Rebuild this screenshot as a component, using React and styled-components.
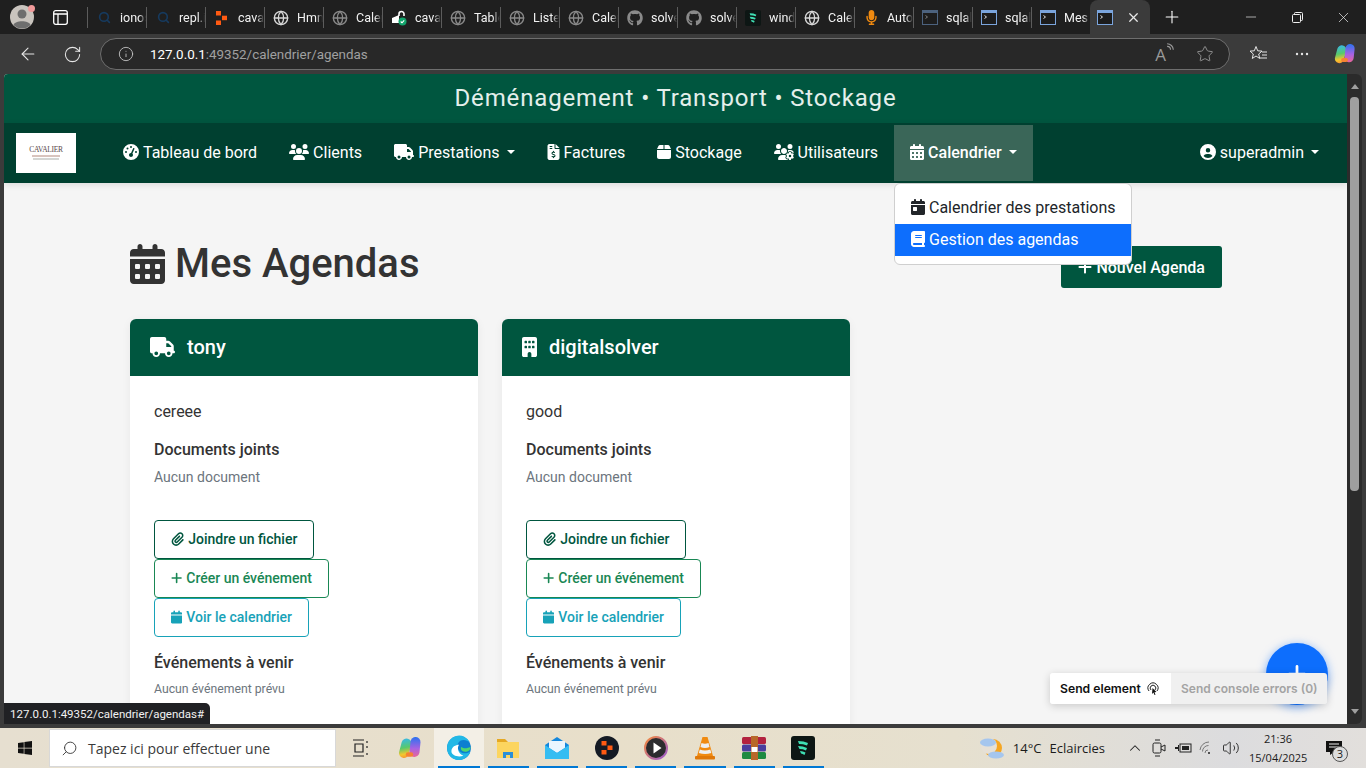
import React from 'react';
import styled, { createGlobalStyle } from 'styled-components';
import { ArrowLeft, RotateCw, Info, Star, Plus, X, Minus, Globe, Search, ChevronUp, Volume2 } from 'lucide-react';
import {
  FaGaugeHigh, FaUsers, FaTruck, FaFileInvoiceDollar, FaBox, FaUsersGear, FaCalendarDays, FaCircleUser,
  FaBook, FaPaperclip, FaPlus, FaCalendar, FaBuilding, FaCalendarDay, FaGithub, FaWindows, FaMicrophone,
} from 'react-icons/fa6';

const GlobalStyle = createGlobalStyle`
  * { box-sizing: border-box; }
  html, body { margin: 0; height: 100%; overflow: hidden; }
  body { font-family: Roboto, "Liberation Sans", sans-serif; font-size: 16px; color: #212529; }
`;

const Screen = styled.div`
  position: relative;
  width: 1366px;
  height: 768px;
  display: flex;
  flex-direction: column;
  overflow: hidden;
  background: #3b3b3b;
`;

// font awesome glyphs keep their own width, the svg box would be square otherwise
const Ico = styled.span`
  flex: none;
  display: block;
  width: ${p => p.$w}px;
  height: ${p => p.$h}px;
  svg { display: block; width: 100%; height: 100%; }
`;

/* browser chrome */
const TabStrip = styled.div`
  height: 34px;
  flex: none;
  display: flex;
  align-items: stretch;
  background: #1f1f1f;
  color: #fff;
`;

const Profile = styled.div`
  position: relative;
  width: 44px;
  flex: none;
  display: flex;
  align-items: center;
  justify-content: center;
`;

const Dot = styled.span`
  position: absolute;
  top: 5px;
  left: 28px;
  width: 7px;
  height: 7px;
  border-radius: 50%;
  background: #f19a9a;
`;

const SideToggle = styled.div`
  width: 43px;
  flex: none;
  display: flex;
  align-items: center;
  justify-content: center;
  padding-right: 11px;
`;

const Tab = styled.div`
  width: 59px;
  flex: none;
  height: ${p => (p.$active ? '34px' : '21px')};
  margin-top: ${p => (p.$active ? '0' : '7px')};
  display: flex;
  align-items: center;
  gap: 8px;
  padding-left: 8px;
  border-left: 1px solid #5c5c5c;
  font: 12.5px Roboto, sans-serif;
  ${p => p.$active && `
    width: 60px;
    border-left: 0;
    border-radius: 8px 8px 0 0;
    background: #3b3b3b;
    gap: 13px;
    padding-left: 7px;
    color: #e8e8e8;
  `}
`;

const TabIcon = styled.span`
  width: 16px;
  height: 16px;
  flex: none;
  display: flex;
  align-items: center;
  justify-content: center;
  color: #d8d8d8;
`;

const TabLabel = styled.span`
  width: 26px;
  overflow: hidden;
  white-space: nowrap;
  color: #f2f2f2;
  -webkit-mask-image: linear-gradient(to right, #000 72%, transparent);
  mask-image: linear-gradient(to right, #000 72%, transparent);
`;

const NewTab = styled.div`
  width: 44px;
  flex: none;
  display: flex;
  align-items: center;
  justify-content: center;
`;

const WindowControls = styled.div`
  margin-left: auto;
  display: flex;
  align-items: center;
`;

const WindowButton = styled.div`
  width: 46px;
  display: flex;
  justify-content: center;
  color: #f0f0f0;
`;

const Toolbar = styled.div`
  height: 40px;
  flex: none;
  display: flex;
  align-items: center;
  background: #3b3b3b;
  color: #e6e6e6;
`;

const ToolButton = styled.div`
  width: ${p => p.$w || 44}px;
  flex: none;
  display: flex;
  justify-content: center;
`;

const AddressField = styled.div`
  width: 1130px;
  height: 32px;
  margin: 0 6px 0 12px;
  padding: 0 15px 0 17px;
  display: flex;
  align-items: center;
  flex: none;
  background: #282828;
  border: 1px solid #6e6e6e;
  border-radius: 16px;
  color: #c8c8c8;
`;

const Url = styled.span`
  margin-left: 16px;
  font: 13.4px Roboto, sans-serif;
  color: #a0a0a0;
  b { color: #fff; font-weight: 400; }
`;

const AddressTools = styled.div`
  margin-left: auto;
  display: flex;
  align-items: center;
  gap: 21px;
  color: #9a9a9a;
`;

const ReadAloud = styled.span`
  font: 17px "Open Sans", sans-serif;
  display: flex;
  align-items: flex-start;
`;

/* page viewport */
const Viewport = styled.div`
  flex: 1;
  min-height: 0;
  display: flex;
  padding: 0 4px 4px;
`;

const Page = styled.main`
  flex: 1;
  min-width: 0;
  overflow: hidden;
  background: #f5f5f5;
  border-radius: 4px 0 0 0;
`;

const Banner = styled.div`
  height: 49px;
  padding-bottom: 2px;
  display: flex;
  align-items: center;
  justify-content: center;
  background: #00563f;
  color: #e4efeb;
  font-size: 24px;
  letter-spacing: 0.85px;
`;

const Navbar = styled.nav`
  height: 60px;
  display: flex;
  align-items: center;
  padding: 0 12px;
  background: #004030;
  color: #fff;
  box-shadow: 0 2px 6px rgba(0, 0, 0, 0.1);
`;

const Logo = styled.div`
  width: 60px;
  height: 40px;
  margin-right: 31px;
  display: flex;
  flex-direction: column;
  align-items: center;
  justify-content: center;
  background: #fff;
  color: #5a4a4a;
  font: 7.5px/8px "Liberation Serif", serif;
  letter-spacing: -0.3px;
`;

const LogoLine = styled.i`
  display: block;
  width: ${p => p.$w}px;
  height: 2px;
  margin-top: 1px;
  background: ${p => p.$c};
`;

const NavLink = styled.a`
  height: 56px;
  padding: 0 16px 2px;
  display: flex;
  align-items: center;
  gap: 4px;
  color: #fff;
  font-size: 16px;
  background: ${p => (p.$active ? '#3a6658' : 'transparent')};
  font-weight: ${p => (p.$active ? 500 : 400)};
  white-space: nowrap;
  ${p => p.$right && 'margin-left: auto;'}
`;

const Caret = styled.span`
  width: 0;
  height: 0;
  margin-left: 3px;
  border-top: 4.8px solid #fff;
  border-left: 4.8px solid transparent;
  border-right: 4.8px solid transparent;
`;

const Dropdown = styled.div`
  position: absolute;
  left: 894px;
  top: 183px;
  width: 238px;
  padding: 8px 0;
  background: #fff;
  border: 1px solid #cfcfcf;
  border-radius: 6px;
  z-index: 3;
`;

const DropdownItem = styled.div`
  height: 32px;
  padding: 0 16px 2px;
  display: flex;
  align-items: center;
  gap: 4px;
  white-space: nowrap;
  color: ${p => (p.$active ? '#fff' : '#212529')};
  background: ${p => (p.$active ? '#0d6efd' : 'transparent')};
`;

const Content = styled.div`
  padding: 57px 125px 0 126px;
`;

const HeadingRow = styled.div`
  display: flex;
  align-items: flex-end;
  justify-content: space-between;
  margin-bottom: 31px;
`;

const Title = styled.h1`
  margin: 0;
  display: flex;
  align-items: center;
  gap: 10px;
  font-size: 40px;
  line-height: 48px;
  font-weight: 500;
  color: #333;
`;

const PrimaryButton = styled.a`
  height: 42px;
  padding: 0 17px;
  display: flex;
  align-items: center;
  gap: 4px;
  background: #00563f;
  color: #fff;
  font-weight: 500;
  border-radius: 3px;
`;

const CardGrid = styled.div`
  display: grid;
  grid-template-columns: repeat(3, 348px);
  column-gap: 24px;
`;

const Card = styled.section`
  background: #fff;
  border-radius: 6px 6px 0 0;
  box-shadow: 0 2px 10px rgba(0, 0, 0, 0.06);
`;

const CardHeader = styled.header`
  height: 57px;
  padding: 0 20px 2px;
  display: flex;
  align-items: center;
  gap: 12px;
  background: #00563f;
  color: #fff;
  font-size: 20px;
  font-weight: 500;
  border-radius: 6px 6px 0 0;
`;

const CardBody = styled.div`
  padding: 24px 24px 30px;
`;

const Description = styled.p`
  margin: 0 0 16px;
  line-height: 24px;
  color: #333;
`;

const SectionTitle = styled.h6`
  margin: 0 0 8px;
  font-size: 16px;
  line-height: 19px;
  font-weight: 500;
  color: #333;
`;

const Muted = styled.div`
  font-size: 14px;
  line-height: 21px;
  color: #6c757d;
`;

const MutedSmall = styled(Muted)`
  font-size: 12.25px;
  line-height: 19px;
`;

const ButtonStack = styled.div`
  margin: 32px 0 16px;
  display: flex;
  flex-direction: column;
  align-items: flex-start;
`;

const OutlineButton = styled.a`
  height: 39px;
  padding: 0 16px 1px;
  display: flex;
  align-items: center;
  gap: 4px;
  border: 1px solid ${p => p.$color};
  border-radius: 4px;
  color: ${p => p.$color};
  font-size: 14px;
  font-weight: 500;
  white-space: nowrap;
`;

const Scrollbar = styled.div`
  width: 15px;
  flex: none;
  display: flex;
  flex-direction: column;
  align-items: center;
  background: #2b2b2b;
  border-radius: 0 6px 6px 0;
  padding: 10px 0;
`;

const Thumb = styled.div`
  width: 9px;
  height: 394px;
  margin-top: 8px;
  background: #9f9f9f;
  border-radius: 4px;
`;

const ArrowGlyph = styled.span`
  width: 0;
  height: 0;
  border-left: 4.5px solid transparent;
  border-right: 4.5px solid transparent;
  ${p => (p.$up ? 'border-bottom: 5px solid #9f9f9f;' : 'border-top: 5px solid #9f9f9f; margin-top: auto;')}
`;

/* overlays */
const StatusTip = styled.div`
  position: absolute;
  left: 4px;
  top: 703px;
  height: 21px;
  padding: 0 6px;
  display: flex;
  align-items: center;
  background: #202124;
  color: #f2f2f2;
  font-size: 11.5px;
  border-radius: 0 5px 0 0;
  z-index: 4;
`;

const Fab = styled.div`
  position: absolute;
  left: 1266px;
  top: 643px;
  width: 62px;
  height: 62px;
  border-radius: 50%;
  display: flex;
  align-items: center;
  justify-content: center;
  background: #0d6efd;
  color: #fff;
  box-shadow: 0 2px 10px rgba(13, 110, 253, 0.55);
  z-index: 4;
`;

const SendPanel = styled.div`
  position: absolute;
  left: 1050px;
  top: 673px;
  width: 277px;
  height: 31px;
  display: flex;
  border-radius: 3px;
  overflow: hidden;
  box-shadow: 0 2px 8px rgba(0, 0, 0, 0.18);
  font: 600 12.2px Inter, sans-serif;
  z-index: 5;
`;

const SendPart = styled.div`
  height: 100%;
  width: ${p => (p.$muted ? 156 : 121)}px;
  display: flex;
  align-items: center;
  gap: 5px;
  padding: 0 10px;
  background: ${p => (p.$muted ? '#f0f0f0' : '#fff')};
  color: ${p => (p.$muted ? '#a3a3a3' : '#111')};
  font-size: ${p => (p.$muted ? '12px' : 'inherit')};
  white-space: nowrap;
`;

/* taskbar */
const Taskbar = styled.footer`
  height: 40px;
  flex: none;
  display: flex;
  align-items: stretch;
  background: linear-gradient(90deg, #e6dfd0 0%, #e8dfca 45%, #e6e0cf 70%, #dcdcde 90%, #e2dfdc 100%);
  color: #1b1b1b;
  font: 13px "Open Sans", sans-serif;
`;

const StartButton = styled.div`
  width: 49px;
  display: flex;
  align-items: center;
  justify-content: center;
  color: #111;
`;

const SearchBox = styled.div`
  width: 287px;
  margin: 1px 0;
  padding-left: 11px;
  display: flex;
  align-items: center;
  gap: 10px;
  background: #fff;
  border: 1px solid #d8d8d8;
  color: #3a3a3a;
  font-size: 14px;
`;

const SearchGlyph = styled(Search)`
  transform: scaleX(-1);
`;

const TaskItem = styled.div`
  position: relative;
  width: 49.2px;
  flex: none;
  display: flex;
  align-items: center;
  justify-content: center;
  background: ${p => (p.$focused ? '#f3efe6' : 'transparent')};
  &::after {
    content: '';
    display: ${p => (p.$open ? 'block' : 'none')};
    position: absolute;
    left: 4px;
    right: 4px;
    bottom: 0;
    height: 2px;
    background: #0078d4;
  }
`;

const Tray = styled.div`
  margin-left: auto;
  display: flex;
  align-items: center;
`;

const Weather = styled.div`
  display: flex;
  align-items: center;
  gap: 8px;
  margin-right: 18px;
`;

const TraySlot = styled.div`
  width: 24px;
  display: flex;
  justify-content: center;
  color: #222;
`;

const Clock = styled.div`
  width: 58px;
  margin-left: 6px;
  text-align: center;
  font-size: 11px;
  line-height: 19px;
  white-space: nowrap;
`;

const Notify = styled.div`
  position: relative;
  width: 59px;
  display: flex;
  justify-content: center;
  padding-right: 5px;
`;

const NotifyBadge = styled.span`
  position: absolute;
  left: 25px;
  top: 6px;
  width: 16px;
  height: 16px;
  border: 1px solid #555;
  border-radius: 50%;
  background: #ddd;
  font-size: 11px;
  line-height: 14px;
  text-align: center;
`;

const WindIcon = ({ size = 16 }) => (
  <svg width={size} height={size} viewBox="0 0 24 24">
    <rect width="24" height="24" rx="3" fill="#0d1614" />
    <path d="M7 5q6 0 10 2l-1 2.400Q12 8 8 8zM7 10q5 0 9 2l-1 2.400q-3-1.400-6.500-1.400zM9 15q3 0 5.500 1.500l-1 2.500q-2-1.400-3.500-1.500z" fill="#3fe0b4" />
  </svg>
);

const TerminalIcon = ({ dim }) => (
  <svg width="16" height="15" viewBox="0 0 16 15" opacity={dim ? 0.5 : 1}>
    <rect x=".5" y=".5" width="15" height="14" fill="#1c1c1c" stroke="#7aa4dc" />
    <rect x="1" y="1" width="14" height="2" fill="#7aa4dc" />
    <path d="M3.500 5.500l2 1.500-2 1.500" fill="none" stroke="#ddd" />
  </svg>
);

const OrangeMark = ({ size = 16 }) => (
  <svg width={size} height={size} viewBox="0 0 16 16" fill="#ff5a12">
    <rect x="2" y="1" width="5" height="4.500" />
    <rect x="8" y="5.700" width="5" height="4.500" />
    <rect x="2" y="10.500" width="5" height="4.500" />
  </svg>
);

const LockFavicon = () => (
  <svg width="16" height="16" viewBox="0 0 16 16">
    <path d="M1 8l7-3v8H1z" fill="#fff" />
    <path d="M8 6V4a2.500 2.500 0 0 1 5 0v2" fill="none" stroke="#fff" strokeWidth="1.600" />
    <circle cx="11.500" cy="11.500" r="4" fill="#12a36b" />
    <path d="M9.700 11.500l1.300 1.300 2.200-2.400" fill="none" stroke="#fff" strokeWidth="1.100" />
  </svg>
);

const CopilotIcon = ({ size = 22, id }) => (
  <svg width={size} height={size} viewBox="0 0 24 24" fill="none" strokeLinecap="round">
    <defs>
      <linearGradient id={`${id}a`} gradientUnits="userSpaceOnUse" x1="6" y1="2" x2="10" y2="23">
        <stop offset="0" stopColor="#35b8ee" />
        <stop offset=".45" stopColor="#58c96c" />
        <stop offset=".75" stopColor="#f5c62e" />
        <stop offset="1" stopColor="#f58233" />
      </linearGradient>
      <linearGradient id={`${id}b`} gradientUnits="userSpaceOnUse" x1="16" y1="1" x2="16" y2="22">
        <stop offset="0" stopColor="#2b72f0" />
        <stop offset=".55" stopColor="#a862e2" />
        <stop offset="1" stopColor="#f3668f" />
      </linearGradient>
    </defs>
    <path d="M8.500 7.500L6 17" stroke={`url(#${id}a)`} strokeWidth="10" />
    <path d="M17.500 6l-1 10" stroke={`url(#${id}b)`} strokeWidth="10" />
    <path d="M10 18.500h3" stroke="#f58233" strokeWidth="4.500" />
  </svg>
);

const EdgeIcon = () => (
  <svg width="26" height="26" viewBox="0 0 24 24">
    <circle cx="12" cy="12" r="11" fill="#0c7fd0" />
    <path d="M1 12a11 11 0 0 1 21-5c-3-3-9-3.500-11 1-1.500 3 .5 7 4 8.500 3 1 6 0 7.500-1.500A11 11 0 0 1 7 22c-4-2-6-6-6-10z" fill="#22b8e6" />
    <path d="M5 15c0-4 4-6 7-6-2 3-1 8 4 10-4 2-11 0-11-4z" fill="#fff" />
    <path d="M22.500 11c.5 3-3.500 5.500-7 4-2-1-2-3-1.500-4 3 2 6 1 8.500 0z" fill="#4dd66f" />
  </svg>
);

const FolderIcon = () => (
  <svg width="24" height="22" viewBox="0 0 24 22">
    <path d="M1 2h8l3 3H1z" fill="#e5a823" />
    <rect x="1" y="5" width="22" height="16" fill="#fcd55f" />
    <path d="M7 21v-6h10v6h-3v-3h-4v3z" fill="#2a8fd8" />
  </svg>
);

const MailIcon = () => (
  <svg width="24" height="24" viewBox="0 0 24 24">
    <path d="M0 9l12-8 12 8v14H0z" fill="#1487dc" />
    <path d="M4 5h16v7l-8 5-8-5z" fill="#eaf6ff" />
    <path d="M0 9l12 8 12-8v14H0z" fill="#35bdf2" />
  </svg>
);

const DiscIcon = () => (
  <svg width="24" height="24" viewBox="0 0 24 24">
    <circle cx="12" cy="12" r="12" fill="#141a24" />
    <g fill="#ff5a12">
      <rect x="6.500" y="5" width="5" height="4.500" />
      <rect x="12.500" y="9.500" width="5" height="4.500" />
      <rect x="6.500" y="14" width="5" height="4.500" />
    </g>
  </svg>
);

const PlayIcon = () => (
  <svg width="24" height="24" viewBox="0 0 24 24">
    <defs>
      <linearGradient id="playring" x1="0" y1="0" x2="1" y2="1">
        <stop offset="0" stopColor="#f58a3c" />
        <stop offset="1" stopColor="#9a5bd0" />
      </linearGradient>
    </defs>
    <circle cx="12" cy="12" r="11" fill="#2b2b2e" stroke="url(#playring)" strokeWidth="2" />
    <path d="M9.500 6.500l8 5.500-8 5.500z" fill="#fff" />
  </svg>
);

const VlcIcon = () => (
  <svg width="20" height="24" viewBox="0 0 20 24">
    <path d="M7.500 1h5l5.500 19H2z" fill="#f08a10" />
    <path d="M6.500 7q3.500 1.500 7 0l1 4q-4.500 2-9 0zM4.800 13.500q5 2 10.500 0l1 3.500q-6 2-12.500 0z" fill="#eee" />
    <rect x="0" y="20" width="20" height="3.500" rx="1" fill="#e07808" />
  </svg>
);

const RarIcon = () => (
  <svg width="24" height="24" viewBox="0 0 24 24">
    <rect x="0" y="1" width="24" height="7" rx="1.500" fill="#b3223f" />
    <rect x="0" y="8.500" width="24" height="7" rx="1.500" fill="#4a3e9e" />
    <rect x="0" y="16" width="24" height="7" rx="1.500" fill="#1e8a42" />
    <rect x="9" y="0" width="7" height="24" fill="#b8682a" />
    <rect x="9.500" y="11" width="6" height="5" fill="#fff" />
  </svg>
);

const WeatherIcon = () => (
  <svg width="26" height="24" viewBox="0 0 26 24">
    <circle cx="14" cy="12" r="9" fill="#f5a623" />
    <circle cx="10" cy="10" r="8" fill="#e6e0d6" />
    <ellipse cx="9" cy="6.500" rx="8" ry="4" fill="#a5c6ee" />
    <ellipse cx="17" cy="19" rx="8" ry="3.500" fill="#a5c6ee" />
  </svg>
);

const tabs = [
  { icon: <Search size={13} strokeWidth={3} color="#163a5e" />, label: 'ionos' },
  { icon: <Search size={13} strokeWidth={3} color="#163a5e" />, label: 'repl.it' },
  { icon: <OrangeMark />, label: 'cavalier' },
  { icon: <Globe size={16} />, label: 'Hmn' },
  { icon: <Globe size={16} color="#8a8a8a" />, label: 'Calendar' },
  { icon: <LockFavicon />, label: 'cavalier' },
  { icon: <Globe size={16} color="#8a8a8a" />, label: 'Tableau' },
  { icon: <Globe size={16} color="#8a8a8a" />, label: 'Liste' },
  { icon: <Globe size={16} color="#8a8a8a" />, label: 'Calendar' },
  { icon: <FaGithub size={16} color="#8a8a8a" />, label: 'solver' },
  { icon: <FaGithub size={16} color="#8a8a8a" />, label: 'solver' },
  { icon: <WindIcon />, label: 'windsurf' },
  { icon: <Globe size={16} />, label: 'Calendar' },
  { icon: <FaMicrophone size={15} color="#f08a10" />, label: 'Auto' },
  { icon: <TerminalIcon dim />, label: 'sqlalk' },
  { icon: <TerminalIcon />, label: 'sqlalk' },
  { icon: <TerminalIcon />, label: 'Mes' },
];

const navItems = [
  { Glyph: FaGaugeHigh, w: 16, label: 'Tableau de bord' },
  { Glyph: FaUsers, w: 20, label: 'Clients' },
  { Glyph: FaTruck, w: 20, label: 'Prestations', caret: true },
  { Glyph: FaFileInvoiceDollar, w: 13, label: 'Factures' },
  { Glyph: FaBox, w: 14, label: 'Stockage' },
  { Glyph: FaUsersGear, w: 20, label: 'Utilisateurs' },
  { Glyph: FaCalendarDays, w: 14, label: 'Calendrier', caret: true, active: true },
];

const agendas = [
  { name: 'tony', Glyph: FaTruck, w: 25, description: 'cereee' },
  { name: 'digitalsolver', Glyph: FaBuilding, w: 15, description: 'good' },
];

const AgendaCard = ({ agenda }) => (
  <Card>
    <CardHeader>
      <Ico $w={agenda.w} $h={20}><agenda.Glyph /></Ico>
      {agenda.name}
    </CardHeader>
    <CardBody>
      <Description>{agenda.description}</Description>
      <SectionTitle>Documents joints</SectionTitle>
      <Muted>Aucun document</Muted>
      <ButtonStack>
        <OutlineButton $color="#00563f"><Ico $w={13.25} $h={14}><FaPaperclip /></Ico>Joindre un fichier</OutlineButton>
        <OutlineButton $color="#198754"><Ico $w={11.25} $h={14}><FaPlus /></Ico>Créer un événement</OutlineButton>
        <OutlineButton $color="#17a2b8"><Ico $w={11.25} $h={14}><FaCalendar /></Ico>Voir le calendrier</OutlineButton>
      </ButtonStack>
      <SectionTitle>Événements à venir</SectionTitle>
      <MutedSmall>Aucun événement prévu</MutedSmall>
    </CardBody>
  </Card>
);

export default function App() {
  return (
    <Screen>
      <GlobalStyle />
      <TabStrip>
        <Profile>
          <svg width="24" height="24" viewBox="0 0 24 24">
            <circle cx="12" cy="12" r="12" fill="#c9c4be" />
            <circle cx="12" cy="9" r="4.500" fill="#6e6e6e" />
            <path d="M3.500 20c1.500-5 15.500-5 17 0a12 12 0 0 1-17 0z" fill="#6e6e6e" />
          </svg>
          <Dot />
        </Profile>
        <SideToggle>
          <svg width="15" height="15" viewBox="0 0 15 15" fill="none" stroke="#fff" strokeWidth="1.300">
            <rect x=".7" y=".7" width="13.600" height="13.600" rx="2" />
            <path d="M.7 4h13.600M5 4v10" />
          </svg>
        </SideToggle>
        {tabs.map((tab, i) => (
          <Tab key={i}>
            <TabIcon>{tab.icon}</TabIcon>
            <TabLabel>{tab.label}</TabLabel>
          </Tab>
        ))}
        <Tab $active>
          <TabIcon><TerminalIcon /></TabIcon>
          <X size={15} />
        </Tab>
        <NewTab><Plus size={20} strokeWidth={1.3} /></NewTab>
        <WindowControls>
          <WindowButton><Minus size={16} strokeWidth={1} /></WindowButton>
          <WindowButton>
            <svg width="11" height="11" viewBox="0 0 11 11" fill="none" stroke="#f0f0f0">
              <rect x=".5" y="2.500" width="8" height="8" rx="1" />
              <path d="M2.500 2.500v-1a1 1 0 0 1 1-1h6a1 1 0 0 1 1 1v6a1 1 0 0 1-1 1h-1" />
            </svg>
          </WindowButton>
          <WindowButton><X size={17} strokeWidth={1} /></WindowButton>
        </WindowControls>
      </TabStrip>

      <Toolbar>
        <ToolButton $w={56}><ArrowLeft size={20} strokeWidth={1.3} /></ToolButton>
        <ToolButton $w={32}><RotateCw size={19} strokeWidth={1.3} /></ToolButton>
        <AddressField>
          <Info size={16} strokeWidth={1.3} />
          <Url><b>127.0.0.1</b>:49352/calendrier/agendas</Url>
          <AddressTools>
            <ReadAloud>
              A
              <svg width="9" height="9" viewBox="0 0 8 8" fill="none" stroke="#9a9a9a">
                <path d="M1 3a3 3 0 0 1 3 3M1 .7A5.500 5.500 0 0 1 6.500 6" />
              </svg>
            </ReadAloud>
            <Star size={18} strokeWidth={1.2} />
          </AddressTools>
        </AddressField>
        <ToolButton $w={44}>
          <svg width="19" height="18" viewBox="0 0 19 18" fill="none" stroke="#e6e6e6">
            <path d="M7 1.500l1.700 4.300 4.300.3-3.300 2.900 1 4.500L7 11l-3.700 2.500 1-4.500L1 6.100l4.300-.3z" />
            <path d="M13 7h5M13 10h5M11 13h7" />
          </svg>
        </ToolButton>
        <ToolButton $w={43}>
          <svg width="14" height="4" viewBox="0 0 14 4" fill="#e6e6e6">
            <circle cx="2" cy="2" r="1.200" /><circle cx="7" cy="2" r="1.200" /><circle cx="12" cy="2" r="1.200" />
          </svg>
        </ToolButton>
        <ToolButton $w={43}><CopilotIcon id="cpa" /></ToolButton>
      </Toolbar>

      <Viewport>
        <Page>
          <Banner>Déménagement • Transport • Stockage</Banner>
          <Navbar>
            <Logo>
              CAVALIER
              <LogoLine $w={28} $c="#d8c4be" />
              <LogoLine $w={26} $c="#d4d6d4" />
            </Logo>
            {navItems.map(item => (
              <NavLink key={item.label} $active={item.active}>
                <Ico $w={item.w} $h={16}><item.Glyph /></Ico>
                {item.label}
                {item.caret && <Caret />}
              </NavLink>
            ))}
            <NavLink $right><Ico $w={16} $h={16}><FaCircleUser /></Ico>superadmin<Caret /></NavLink>
          </Navbar>
          <Content>
            <HeadingRow>
              <Title><Ico $w={35} $h={40}><FaCalendarDays /></Ico>Mes Agendas</Title>
              <PrimaryButton><Ico $w={14} $h={16}><FaPlus /></Ico>Nouvel Agenda</PrimaryButton>
            </HeadingRow>
            <CardGrid>
              {agendas.map(agenda => <AgendaCard key={agenda.name} agenda={agenda} />)}
            </CardGrid>
          </Content>
        </Page>
        <Scrollbar>
          <ArrowGlyph $up />
          <Thumb />
          <ArrowGlyph />
        </Scrollbar>
      </Viewport>

      <Taskbar>
        <StartButton><FaWindows size={16} /></StartButton>
        <SearchBox><SearchGlyph size={17} strokeWidth={1.3} />Tapez ici pour effectuer une</SearchBox>
        <TaskItem>
          <svg width="18" height="18" viewBox="0 0 18 18" fill="none" stroke="#222" strokeWidth="1.200">
            <path d="M1 1h11M1 17h11M3 5h8v8H3zM15 2v2M15 7v2M15 14v2" />
          </svg>
        </TaskItem>
        <TaskItem><CopilotIcon size={24} id="cpb" /></TaskItem>
        <TaskItem $focused $open><EdgeIcon /></TaskItem>
        <TaskItem $open><FolderIcon /></TaskItem>
        <TaskItem $open><MailIcon /></TaskItem>
        <TaskItem $open><DiscIcon /></TaskItem>
        <TaskItem $open><PlayIcon /></TaskItem>
        <TaskItem $open><VlcIcon /></TaskItem>
        <TaskItem $open><RarIcon /></TaskItem>
        <TaskItem $open><WindIcon size={24} /></TaskItem>
        <Tray>
          <Weather><WeatherIcon /><span>14°C</span><span>Eclaircies</span></Weather>
          <TraySlot><ChevronUp size={18} strokeWidth={1.4} /></TraySlot>
          <TraySlot>
            <svg width="16" height="18" viewBox="0 0 16 18" fill="none" stroke="#222">
              <rect x="2" y="4" width="8" height="10" rx="1.500" />
              <path d="M10 8l4-2v6l-4-2M4 1h5M4 17h5" />
            </svg>
          </TraySlot>
          <TraySlot>
            <svg width="17" height="12" viewBox="0 0 17 12" fill="#222">
              <rect x="5" y="2" width="11" height="8" fill="none" stroke="#222" />
              <rect x="7" y="4" width="7" height="4" />
              <path d="M0 5h3V3h1v6H3V7H0z" />
            </svg>
          </TraySlot>
          <TraySlot>
            <svg width="17" height="14" viewBox="0 0 17 14" fill="none" stroke="#777">
              <path d="M1 9a9 9 0 0 1 9-8M3.500 10.500a6 6 0 0 1 6-6M6 12a3 3 0 0 1 3-3" />
              <circle cx="10" cy="12" r="1" fill="#222" stroke="none" />
            </svg>
          </TraySlot>
          <TraySlot><Volume2 size={18} strokeWidth={1.2} /></TraySlot>
          <Clock>21:36<br />15/04/2025</Clock>
          <Notify>
            <svg width="18" height="16" viewBox="0 0 18 16" fill="#111">
              <path d="M1 1h16v11H9l-4 3v-3H1z" />
              <path d="M4 4h10M4 7h10" stroke="#eee" />
            </svg>
            <NotifyBadge>3</NotifyBadge>
          </Notify>
        </Tray>
      </Taskbar>

      <Dropdown>
        <DropdownItem><Ico $w={14} $h={16}><FaCalendarDay /></Ico>Calendrier des prestations</DropdownItem>
        <DropdownItem $active><Ico $w={14} $h={16}><FaBook /></Ico>Gestion des agendas</DropdownItem>
      </Dropdown>
      <StatusTip>127.0.0.1:49352/calendrier/agendas#</StatusTip>
      <Fab><FaPlus size={22} /></Fab>
      <SendPanel>
        <SendPart>
          Send element
          <svg width="14" height="14" viewBox="0 0 14 14" fill="none" stroke="#222">
            <path d="M3 9a5 5 0 1 1 8 0M5 8a2.800 2.800 0 1 1 4 0" />
            <path d="M6.500 6l4 4-2 .2 1 2.500-1 .4-1-2.500-1.500 1.400z" fill="#111" stroke="none" />
          </svg>
        </SendPart>
        <SendPart $muted>Send console errors (0)</SendPart>
      </SendPanel>
    </Screen>
  );
}
